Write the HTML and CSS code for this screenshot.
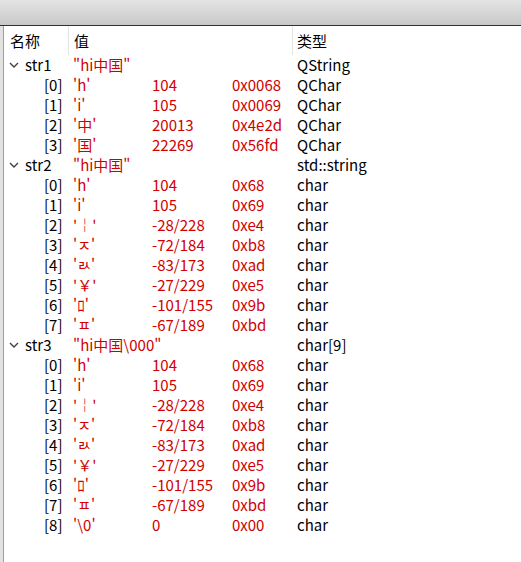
FILE: index.html
```html
<!DOCTYPE html>
<html lang="zh">
<head>
<meta charset="utf-8">
<link rel="stylesheet" href="styles.css">
</head>
<body>
<div class="titlebar"></div>
<div class="main">
  <div class="edge"></div>
  <div class="tree">
    <div class="row header">
      <div class="c-name">名称</div>
      <div class="c-head sep">值</div>
      <div class="c-type sep">类型</div>
    </div>

    <div class="row">
      <div class="c-name top"><svg class="arrow" width="10" height="6" viewBox="0 0 10 6"><polyline points="1,1 5,5 9,1"/></svg>str1</div>
      <div class="c-val">"hi中国"</div>
      <div class="c-type">QString</div>
    </div>
    <div class="row"><div class="c-name child">[0]</div><div class="c-val split"><span>'h'</span><span>104</span><span>0x0068</span></div><div class="c-type">QChar</div></div>
    <div class="row"><div class="c-name child">[1]</div><div class="c-val split"><span>'i'</span><span>105</span><span>0x0069</span></div><div class="c-type">QChar</div></div>
    <div class="row"><div class="c-name child">[2]</div><div class="c-val split"><span>'中'</span><span>20013</span><span>0x4e2d</span></div><div class="c-type">QChar</div></div>
    <div class="row"><div class="c-name child">[3]</div><div class="c-val split"><span>'国'</span><span>22269</span><span>0x56fd</span></div><div class="c-type">QChar</div></div>

    <div class="row">
      <div class="c-name top"><svg class="arrow" width="10" height="6" viewBox="0 0 10 6"><polyline points="1,1 5,5 9,1"/></svg>str2</div>
      <div class="c-val">"hi中国"</div>
      <div class="c-type">std::string</div>
    </div>
    <div class="row"><div class="c-name child">[0]</div><div class="c-val split"><span>'h'</span><span>104</span><span>0x68</span></div><div class="c-type">char</div></div>
    <div class="row"><div class="c-name child">[1]</div><div class="c-val split"><span>'i'</span><span>105</span><span>0x69</span></div><div class="c-type">char</div></div>
    <div class="row"><div class="c-name child">[2]</div><div class="c-val split"><span>'&#xFFE4;'</span><span>-28/228</span><span>0xe4</span></div><div class="c-type">char</div></div>
    <div class="row"><div class="c-name child">[3]</div><div class="c-val split"><span>'&#xFFB8;'</span><span>-72/184</span><span>0xb8</span></div><div class="c-type">char</div></div>
    <div class="row"><div class="c-name child">[4]</div><div class="c-val split"><span>'&#xFFAD;'</span><span>-83/173</span><span>0xad</span></div><div class="c-type">char</div></div>
    <div class="row"><div class="c-name child">[5]</div><div class="c-val split"><span>'&#xFFE5;'</span><span>-27/229</span><span>0xe5</span></div><div class="c-type">char</div></div>
    <div class="row"><div class="c-name child">[6]</div><div class="c-val split"><span>'&#xFF9B;'</span><span>-101/155</span><span>0x9b</span></div><div class="c-type">char</div></div>
    <div class="row"><div class="c-name child">[7]</div><div class="c-val split"><span>'&#xFFBD;'</span><span>-67/189</span><span>0xbd</span></div><div class="c-type">char</div></div>

    <div class="row">
      <div class="c-name top"><svg class="arrow" width="10" height="6" viewBox="0 0 10 6"><polyline points="1,1 5,5 9,1"/></svg>str3</div>
      <div class="c-val">"hi中国\000"</div>
      <div class="c-type">char[9]</div>
    </div>
    <div class="row"><div class="c-name child">[0]</div><div class="c-val split"><span>'h'</span><span>104</span><span>0x68</span></div><div class="c-type">char</div></div>
    <div class="row"><div class="c-name child">[1]</div><div class="c-val split"><span>'i'</span><span>105</span><span>0x69</span></div><div class="c-type">char</div></div>
    <div class="row"><div class="c-name child">[2]</div><div class="c-val split"><span>'&#xFFE4;'</span><span>-28/228</span><span>0xe4</span></div><div class="c-type">char</div></div>
    <div class="row"><div class="c-name child">[3]</div><div class="c-val split"><span>'&#xFFB8;'</span><span>-72/184</span><span>0xb8</span></div><div class="c-type">char</div></div>
    <div class="row"><div class="c-name child">[4]</div><div class="c-val split"><span>'&#xFFAD;'</span><span>-83/173</span><span>0xad</span></div><div class="c-type">char</div></div>
    <div class="row"><div class="c-name child">[5]</div><div class="c-val split"><span>'&#xFFE5;'</span><span>-27/229</span><span>0xe5</span></div><div class="c-type">char</div></div>
    <div class="row"><div class="c-name child">[6]</div><div class="c-val split"><span>'&#xFF9B;'</span><span>-101/155</span><span>0x9b</span></div><div class="c-type">char</div></div>
    <div class="row"><div class="c-name child">[7]</div><div class="c-val split"><span>'&#xFFBD;'</span><span>-67/189</span><span>0xbd</span></div><div class="c-type">char</div></div>
    <div class="row"><div class="c-name child">[8]</div><div class="c-val split"><span>'\0'</span><span>0</span><span>0x00</span></div><div class="c-type">char</div></div>
  </div>
</div>
</body>
</html>
```
FILE: styles.css
```css
html, body {
  margin: 0;
  padding: 0;
}
body {
  width: 521px;
  height: 562px;
  overflow: hidden;
  background: #ffffff;
  font-family: "Noto Sans CJK SC", "Noto Sans", sans-serif;
  font-size: 15px;
  color: #000000;
}
.titlebar {
  height: 25px;
  background: linear-gradient(#e4e4e4, #c8c8c8);
  border-bottom: 1px solid #303030;
}
.main {
  display: flex;
  height: 536px;
}
.edge {
  width: 3px;
  background: #e2e2e2;
  border-right: 1px solid #a0a0a0;
}
.tree {
  flex: 1;
  background: #ffffff;
}
.row {
  display: grid;
  grid-template-columns: 64px 224px 1fr;
  height: 20px;
  line-height: 20px;
  white-space: nowrap;
}
.row.header {
  height: 29px;
  line-height: 29px;
}
.header .c-name {
  padding-left: 6px;
}
.header .c-head {
  padding-left: 5px;
  color: #000000;
}
.header .sep {
  border-left: 1px solid #e3e3e3;
}
.header .c-type {
  padding-left: 4px;
}
.c-name.top {
  display: flex;
  align-items: center;
  padding-left: 5px;
}
.arrow {
  fill: none;
  stroke: #404040;
  stroke-width: 1.4;
  margin-right: 6px;
}
.c-name.child {
  padding-left: 40px;
}
.c-val {
  padding-left: 5px;
  color: #d00000;
}
.c-val.split {
  display: grid;
  grid-template-columns: 79px 80px 1fr;
}
.c-type {
  padding-left: 5px;
}
```
